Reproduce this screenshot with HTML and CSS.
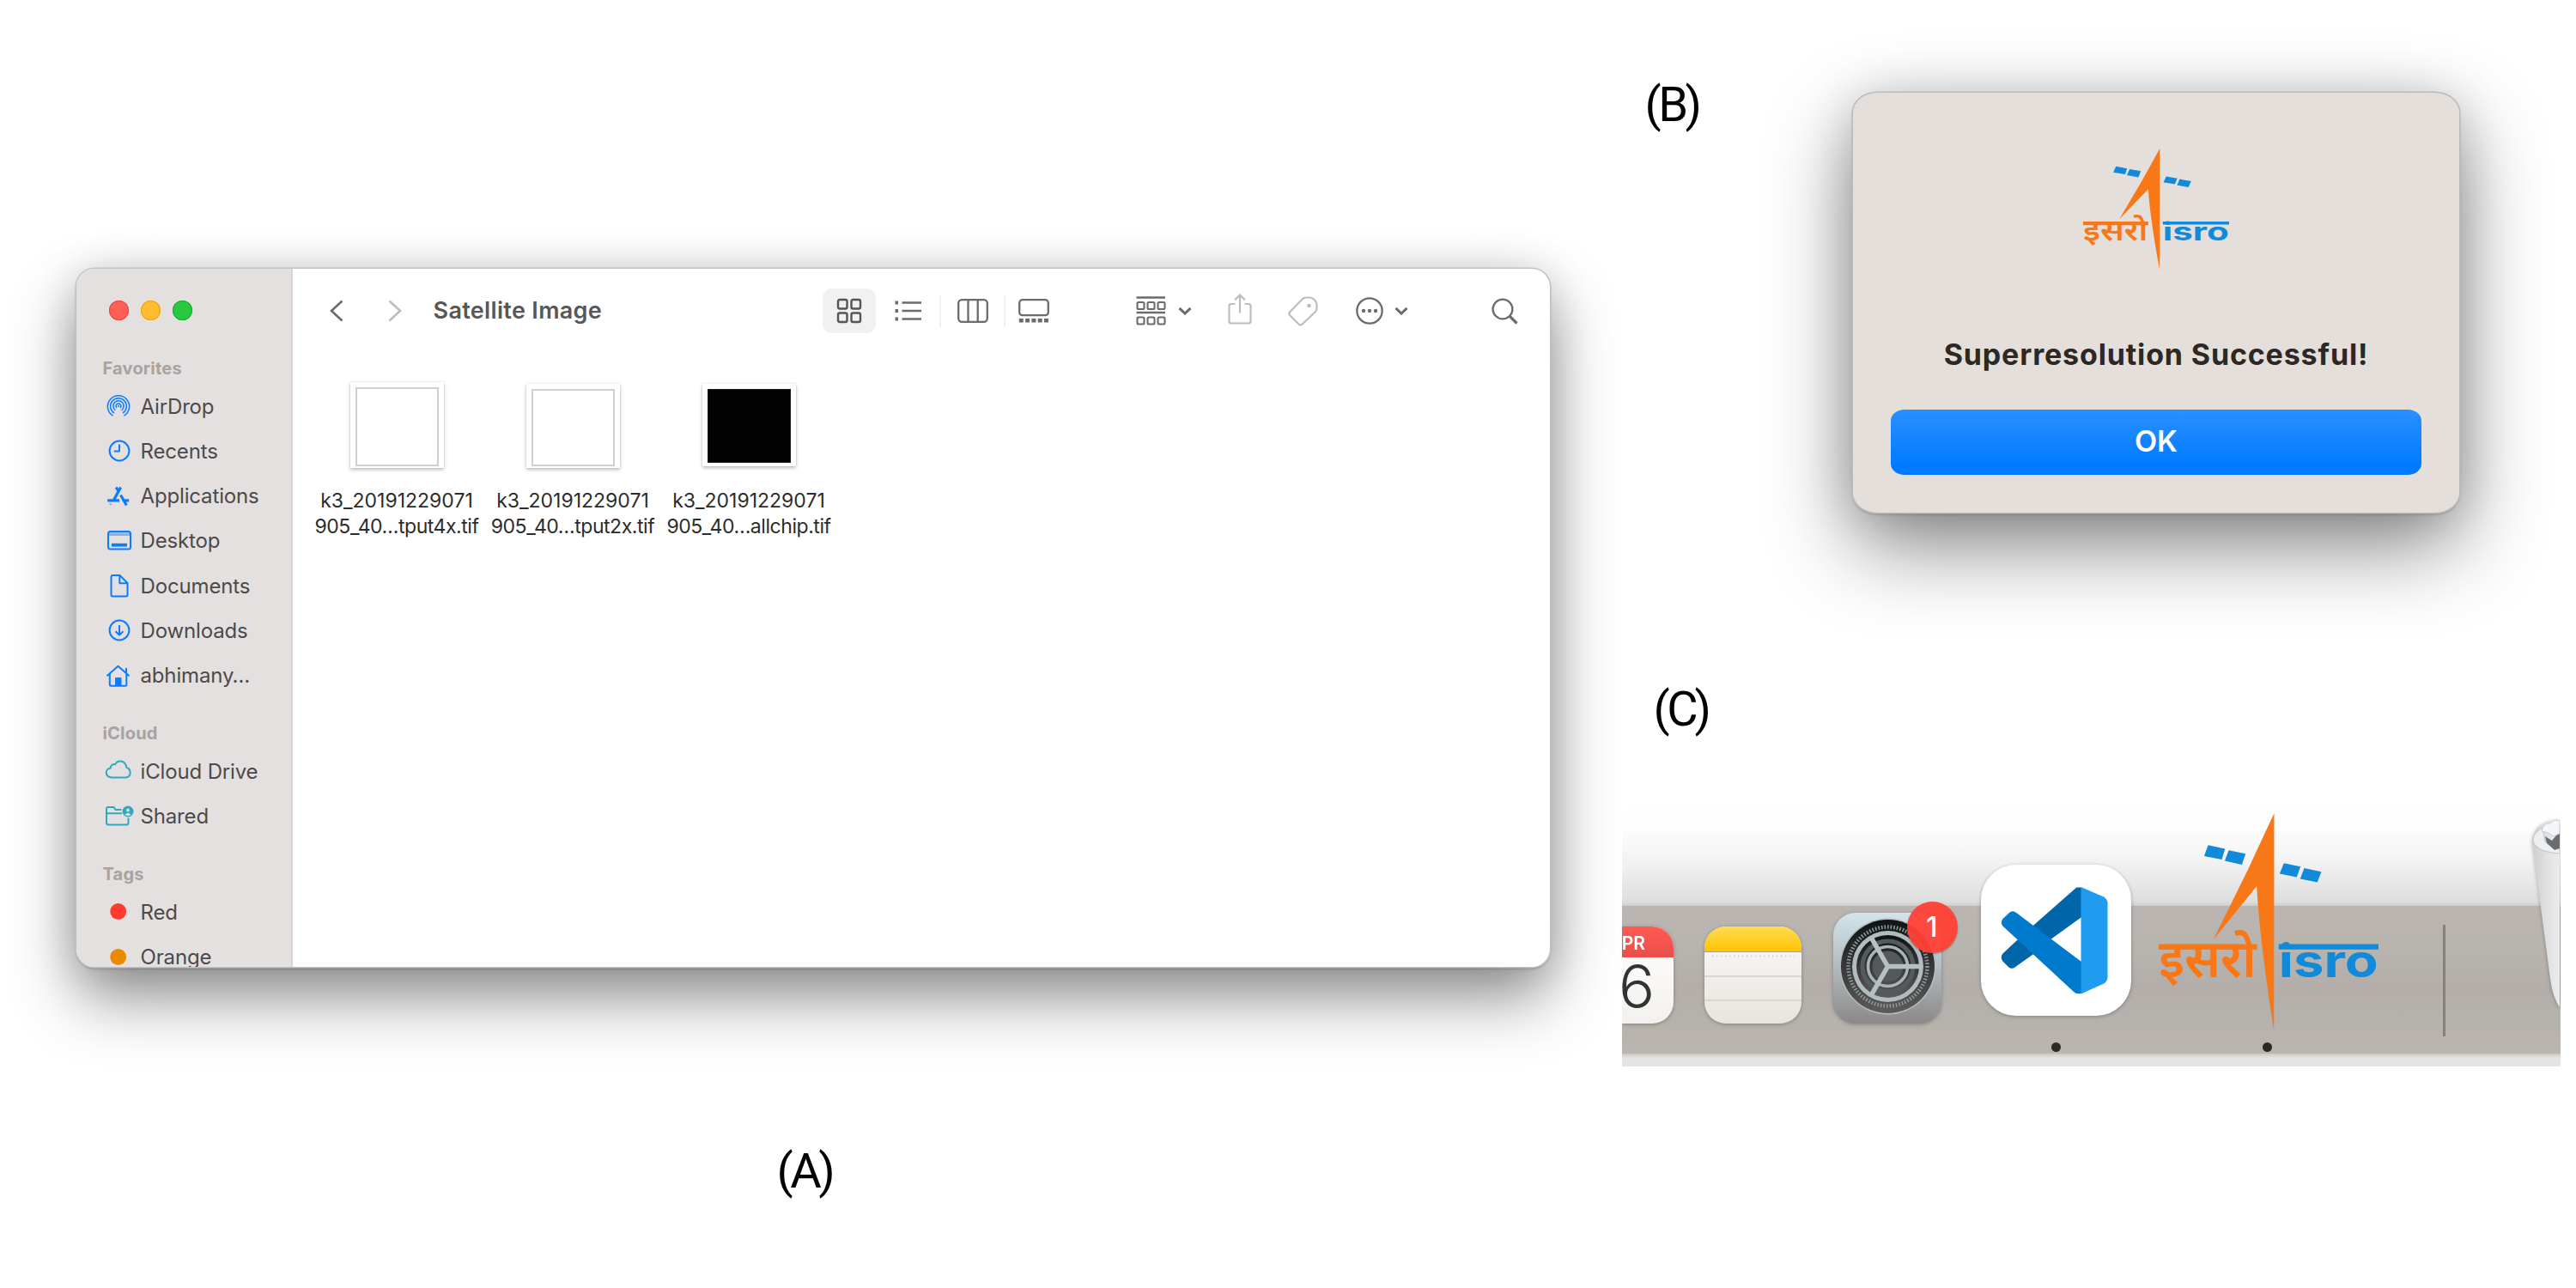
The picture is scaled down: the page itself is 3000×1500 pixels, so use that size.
FILE: index.html
```html
<!DOCTYPE html>
<html lang="en">
<head>
<meta charset="utf-8">
<title>Super-resolution output</title>
<link rel="stylesheet" href="styles.css">
</head>
<body>
<main class="page">
  <section class="col-left">
    <div class="finder">
      <aside class="sidebar">
        <div class="lights"><i class="red"></i><i class="yellow"></i><i class="green"></i></div>
        <h3>Favorites</h3>
        <ul>
          <li><svg viewBox="0 0 32 32"><path stroke-width="1.500" d="M9.600 27.200A12.600 12.600 0 1 1 22.400 27.200M11 24A9.400 9.400 0 1 1 21 24M12.400 20.800A6.100 6.100 0 1 1 19.600 20.800M14 18A2.900 2.900 0 1 1 18 18"/><circle class="fill" cx="16" cy="16" r=".6" stroke-width="1"/></svg>AirDrop</li>
          <li><svg viewBox="0 0 32 32"><circle cx="17" cy="16" r="11.400"/><path d="M17 8.500V16.500H10.800"/></svg>Recents</li>
          <li><svg viewBox="0 0 32 32"><path stroke-width="3.200" d="M18.600 5.500 10.500 20.300M13.200 5.500 16 10M18.500 14.500 25.300 26.500M3.200 20.800H17M21.500 20.800H28.200M6.700 25.600 7 25"/></svg>Applications</li>
          <li><svg viewBox="0 0 32 32"><rect x="4" y="5" width="26" height="20.500" rx="2.500"/><path opacity=".45" stroke-width="3.600" d="M5 8.200H29"/><path class="fill" stroke="none" d="M8 18.800H26V22.600H8Z"/></svg>Desktop</li>
          <li><svg viewBox="0 0 32 32"><path d="M9.500 4H17.500L26.500 13V26.500Q26.500 28.500 24.500 28.500H9.500Q7.500 28.500 7.500 26.500V6Q7.500 4 9.500 4ZM17.300 4.500V13.200H26"/></svg>Documents</li>
          <li><svg viewBox="0 0 32 32"><circle cx="17" cy="16" r="11.400"/><path d="M17 10V21.200M12.600 17.200 17 21.600 21.400 17.200"/></svg>Downloads</li>
          <li><svg viewBox="0 0 32 32"><path d="M2.500 16.200 15.500 4.800 28.500 16.200M5.800 14V26.300Q5.800 27.800 7.300 27.800H23.800Q25.300 27.800 25.300 26.300V14M25 12.500V7"/><path class="fill" d="M13 19H18.500V27H13Z"/></svg>abhimany…</li>
        </ul>
        <h3>iCloud</h3>
        <ul class="teal">
          <li><svg viewBox="0 0 32 32"><path d="M8.500 23.500C-.2 23-.2 13.500 6.800 12.500 6.500 9.500 9.500 7.500 12 8.300 15.500 2 24.500 3.800 25.300 11.800 31 13.500 31.500 23 24.500 23.500Z"/></svg>iCloud Drive</li>
          <li><svg viewBox="0 0 32 32"><path d="M19.500 8H12.500L10.500 5H4Q2 5 2 7V23Q2 25.500 4.500 25.500H25.500Q27.500 25.500 27.500 23V17.500M2 12.200H20"/><circle class="fill" stroke="none" cx="27" cy="10" r="6.500"/><circle cx="27" cy="8.500" r="1.900" fill="#e4e0df" stroke="none"/><path fill="#e4e0df" stroke="none" d="M23.500 14Q27 9.500 30.500 14Q27 16 23.500 14Z"/></svg>Shared</li>
        </ul>
        <h3>Tags</h3>
        <ul>
          <li><svg viewBox="0 0 32 32"><circle cx="15.700" cy="15.500" r="9.400" fill="#ff3b30" stroke="none"/></svg>Red</li>
          <li><svg viewBox="0 0 32 32"><circle cx="15.700" cy="15.500" r="9.400" fill="#eb8a00" stroke="none"/></svg>Orange</li>
        </ul>
      </aside>
      <div class="content">
        <header class="toolbar">
          <svg class="t-back" width="16" height="26" viewBox="0 0 16 26"><path stroke-width="2.600" d="M14.500 1.500 2 13 14.500 24.500"/></svg>
          <svg class="t-fwd dim" width="16" height="26" viewBox="0 0 16 26"><path stroke-width="2.600" d="M1.500 1.500 14 13 1.500 24.500"/></svg>
          <h2>Satellite Image</h2>
          <span class="active"><svg width="30" height="30" viewBox="0 0 30 30"><path stroke-width="2.400" d="M4 2H10.500Q12.500 2 12.500 4V10.500Q12.500 12.500 10.500 12.500H4Q2 12.500 2 10.500V4Q2 2 4 2ZM19.500 2H26Q28 2 28 4V10.500Q28 12.500 26 12.500H19.500Q17.500 12.500 17.500 10.500V4Q17.500 2 19.500 2ZM4 17.500H10.500Q12.500 17.500 12.500 19.500V26Q12.500 28 10.500 28H4Q2 28 2 26V19.500Q2 17.500 4 17.500ZM19.500 17.500H26Q28 17.500 28 19.500V26Q28 28 26 28H19.500Q17.500 28 17.500 26V19.500Q17.500 17.500 19.500 17.500Z"/></svg></span>
          <svg class="t-list" width="32" height="24" viewBox="0 0 32 24"><path stroke-width="2.600" d="M8.500 2.500H31M8.500 12H31M8.500 21.500H31"/><path stroke-width="4" d="M.5 2.500H4M.5 12H4M.5 21.500H4"/></svg>
          <i class="sep s1"></i>
          <svg class="t-cols" width="36" height="28" viewBox="0 0 36 28"><rect x="1.200" y="1.200" width="33.600" height="25.600" rx="4"/><path d="M12.500 1V27M23.700 1V27"/></svg>
          <i class="sep s2"></i>
          <svg class="t-gal" width="36" height="28" viewBox="0 0 36 28"><rect x="1.200" y="1.200" width="33.600" height="18" rx="3.500"/><path stroke-width="4.600" stroke-dasharray="5 2.300" d="M.8 25.300H35.500"/></svg>
          <svg class="t-group" width="35" height="34" viewBox="0 0 35 34"><path d="M.5 1.500H34M.5 19H34"/><g stroke-width="2.100"><rect x="1.500" y="7" width="8" height="8" rx="1.500"/><rect x="13.500" y="7" width="8" height="8" rx="1.500"/><rect x="25.500" y="7" width="8" height="8" rx="1.500"/><rect x="1.500" y="24.500" width="8" height="8" rx="1.500"/><rect x="13.500" y="24.500" width="8" height="8" rx="1.500"/><rect x="25.500" y="24.500" width="8" height="8" rx="1.500"/></g></svg>
          <svg class="t-ch1" width="16" height="10" viewBox="0 0 16 10"><path stroke-width="3" d="M1.500 1.800 8 8 14.500 1.800"/></svg>
          <svg class="t-share dim" width="28" height="36" viewBox="0 0 28 36"><path stroke-width="2.200" d="M8.500 12H4Q1.500 12 1.500 14.500V32Q1.500 34.500 4 34.500H24Q26.500 34.500 26.500 32V14.500Q26.500 12 24 12H19.500M14 22.500V2M8 7.500 14 1.500 20 7.500"/></svg>
          <svg class="t-tag dim" width="35" height="35" viewBox="0 0 35 35"><path stroke-width="2.200" d="M2 18.500 16.500 3.500Q18.500 1.500 21.500 1.500H25Q28 1.500 30 3.500L32 5.500Q33.500 7.500 33.500 10V13.500Q33.500 16.500 31.500 18.500L16 33Q14.500 34 13 33L2 22Q.5 20.300 2 18.500Z"/><circle cx="24.500" cy="11" r="1.200"/></svg>
          <svg class="t-more" width="32" height="32" viewBox="0 0 32 32"><circle cx="16" cy="16" r="14.700"/><g class="dots"><circle cx="9" cy="16" r="2.200"/><circle cx="16" cy="16" r="2.200"/><circle cx="23" cy="16" r="2.200"/></g></svg>
          <svg class="t-ch2" width="16" height="10" viewBox="0 0 16 10"><path stroke-width="3" d="M1.500 1.800 8 8 14.500 1.800"/></svg>
          <svg class="t-search" width="31" height="31" viewBox="0 0 31 31"><circle cx="13" cy="13" r="11.400"/><path stroke-width="3.200" d="M21.300 21.300 29.500 29.500"/></svg>
        </header>
        <div class="files">
          <figure><div class="pic"><div class="thumb tall"></div></div><figcaption>k3_20191229071<br><span>905_40…tput4x.tif</span></figcaption></figure>
          <figure><div class="pic"><div class="thumb"></div></div><figcaption>k3_20191229071<br><span>905_40…tput2x.tif</span></figcaption></figure>
          <figure><div class="pic chip"><div class="thumb black"></div></div><figcaption>k3_20191229071<br><span>905_40…allchip.tif</span></figcaption></figure>
        </div>
      </div>
    </div>
    <p class="label label-a">(A)</p>
  </section>

  <section class="col-right">
    <div class="panel-b">
      <p class="label label-b">(B)</p>
      <div class="dialog">
        <svg class="logo" width="170" height="141" viewBox="102 80 769 760" preserveAspectRatio="none">
          <path class="orange" d="M506 80 412 282 293 523 445 335C450 430 462 530 472 610 482 690 494 770 505 840Z"/>
          <path class="blue" d="M275 192 334 205 323 242 261 230ZM347 210 406 222 393 260 333 247ZM540 255 598 267 585 304 525 292ZM611 272 671 285 657 322 597 310Z"/>
          <path class="orange" d="M102 538H444V557H102Z"/>
          <path class="blue" d="M522 538H871V557H522Z"/>
          <text class="mark-hi" x="102" y="655" textLength="342" lengthAdjust="spacingAndGlyphs">इसरो</text>
          <text class="mark-en" x="522" y="655" textLength="348" lengthAdjust="spacingAndGlyphs">isro</text>
        </svg>
        <h1>Superresolution Successful!</h1>
        <button type="button">OK</button>
      </div>
    </div>
    <p class="label label-c">(C)</p>
    <div class="dock">
      <svg class="d-cal" width="60" height="113" viewBox="0 0 60 113">
        <defs><linearGradient id="calr" x2="0" y2="1"><stop offset="0" stop-color="#ff5a54"/><stop offset="1" stop-color="#e9504b"/></linearGradient><linearGradient id="calw" x2="0" y2="1"><stop offset="0" stop-color="#fff"/><stop offset="1" stop-color="#f3f1ee"/></linearGradient><clipPath id="calc"><rect x="-52" width="112" height="113" rx="25"/></clipPath></defs>
        <g clip-path="url(#calc)"><rect width="60" height="113" fill="url(#calw)"/><rect width="60" height="36" fill="url(#calr)"/></g>
        <text class="cal-m" x="27" y="27" text-anchor="end">APR</text><text class="cal-d" x="-4" y="95">6</text>
      </svg>
      <svg class="d-notes" width="113" height="113" viewBox="0 0 113 113">
        <defs><linearGradient id="ny" x2="0" y2="1"><stop offset="0" stop-color="#ffdc55"/><stop offset="1" stop-color="#ffc400"/></linearGradient><linearGradient id="nw" x2="0" y2="1"><stop offset="0" stop-color="#fafaf9"/><stop offset="1" stop-color="#e8e4de"/></linearGradient><clipPath id="nc"><rect width="113" height="113" rx="25"/></clipPath></defs>
        <g clip-path="url(#nc)"><rect width="113" height="113" fill="url(#nw)"/><rect width="113" height="28.500" fill="url(#ny)"/><path stroke="#a9a295" stroke-width="1.600" d="M0 29.300H113"/><path stroke="#d5d2ce" stroke-width="2" stroke-dasharray="1.500 3.500" d="M9 34.500H105"/><path stroke="#d8d5d2" stroke-width="2" d="M0 58H113M0 86H113"/></g>
      </svg>
      <div class="d-set">
        <svg width="126" height="129" viewBox="0 0 126 129">
          <defs><linearGradient id="sg" x2="0" y2="1"><stop offset="0" stop-color="#d3e4ec"/><stop offset=".45" stop-color="#b4bfc4"/><stop offset="1" stop-color="#8b8986"/></linearGradient><linearGradient id="gg" x2="0" y2="1"><stop offset="0" stop-color="#101314"/><stop offset="1" stop-color="#5c5b5a"/></linearGradient></defs>
          <rect width="126" height="129" rx="26" fill="url(#sg)"/>
          <g transform="translate(63.500 62.500)" fill="none">
            <circle r="56" fill="#b4bcbf"/><circle r="54.500" fill="url(#gg)"/>
            <circle r="46" stroke="#8f989b" stroke-width="4.500" stroke-dasharray="1.600 2"/>
            <circle r="41.500" fill="#b1bcc0"/><circle r="36.500" fill="url(#gg)"/>
            <circle r="29.500" stroke="#555b5d" stroke-width="5"/>
            <circle r="23" stroke="#a9b4b8" stroke-width="3.600"/><circle r="18" fill="#56595a"/>
            <path stroke="#b6c1c5" stroke-width="5.500" d="M0 0H39M0 0-19.500 33.800M0 0-19.500-33.800"/>
          </g>
        </svg>
        <span class="badge">1</span>
      </div>
      <div class="app d-code">
        <svg width="175" height="176" viewBox="0 0 175 176">
          <rect width="175" height="176" rx="41" fill="#fff"/>
          <g stroke-linejoin="round">
            <path fill="#0065a9" stroke="#0065a9" stroke-width="3" d="M112 28 62 72 80 86 116 60V28ZM43 89 26.500 104.500Q24 108 26.500 111.500L33 118Q36 120.500 39 118L60 103Z"/>
            <path fill="#007acc" stroke="#007acc" stroke-width="3" d="M34 57 26.500 64Q24 67.500 27 71L109 147Q112 150 117 148V115L40 57Q37 54.500 34 57Z"/>
            <path fill="#1f9cf0" d="M116.500 26 143 37.500Q147.500 40 147.500 45V131Q147.500 136 143 138.500L116.500 150.500Z"/>
          </g>
        </svg>
        <i class="run"></i>
      </div>
      <div class="app d-isro">
        <svg width="256" height="253" viewBox="102 80 769 760" preserveAspectRatio="none">
          <path class="orange" d="M506 80 412 282 293 523 445 335C450 430 462 530 472 610 482 690 494 770 505 840Z"/>
          <path class="blue" d="M275 192 334 205 323 242 261 230ZM347 210 406 222 393 260 333 247ZM540 255 598 267 585 304 525 292ZM611 272 671 285 657 322 597 310Z"/>
          <path class="orange" d="M102 538H444V557H102Z"/>
          <path class="blue" d="M522 538H871V557H522Z"/>
          <text class="mark-hi" x="102" y="655" textLength="342" lengthAdjust="spacingAndGlyphs">इसरो</text>
          <text class="mark-en" x="522" y="655" textLength="348" lengthAdjust="spacingAndGlyphs">isro</text>
        </svg>
        <i class="run"></i>
      </div>
      <i class="divider"></i>
      <svg class="d-trash" width="33" height="225" viewBox="0 0 33 225">
        <defs><linearGradient id="tb"><stop offset="0" stop-color="#cbcdd0"/><stop offset=".5" stop-color="#e0e0e1"/><stop offset="1" stop-color="#ececee"/></linearGradient></defs>
        <path fill="url(#tb)" d="M1 30Q2 16 12 10L20 6 33 6V223Q25 212 22 190Z"/>
        <path fill="#eeeff1" stroke="#c6c9cd" stroke-width="1.200" d="M2 30Q1 20 13 14L16 30 33 38V44Q6 42 2 30Z"/>
        <path fill="#6a6c6f" d="M16 24 24 29 29 23 33 21V38L27 40 18 32Z"/>
        <path fill="#f3f5f8" stroke="#c9ccd2" d="M12 18Q14 8 22 9 27 3 33 6V20L26 24 20 20Z"/>
      </svg>
    </div>
  </section>
</main>
</body>
</html>
```
FILE: styles.css
```css
* { box-sizing: border-box; margin: 0; padding: 0; }
body { width: 3000px; height: 1500px; background: #fff; overflow: hidden; font-family: Inter, "Noto Sans", sans-serif; }
i { font-style: normal; }
.page { display: grid; grid-template-columns: 1880px 1120px; height: 1500px; }

.orange { fill: #f87717; }
.blue { fill: #108ad9; }
.mark-hi { font: 600 185px "Noto Sans Devanagari", Inter, sans-serif; fill: #f87717; }
.mark-en { font: 700 160px Inter, sans-serif; fill: #108ad9; }

.label { font: 400 56px/66px Roboto, sans-serif; letter-spacing: -3.5px; color: #000; }

/* Finder window */
.col-left { padding: 313px 0 0 89px; }
.finder {
  display: grid; grid-template-columns: 252px 1fr; width: 1716px; height: 813px;
  border-radius: 21px; overflow: hidden; background: #fff;
  box-shadow: 0 0 0 1.5px #c2c2c2, 0 2px 3px rgba(0,0,0,.3), 0 36px 76px rgba(0,0,0,.43), 0 4px 50px rgba(0,0,0,.14);
}
.label-a { margin: 205px 0 0 815.5px; }
.sidebar { background: #e4e0df; border-right: 2px solid #dad5d4; overflow: hidden; }
.lights { display: flex; gap: 14.3px; padding: 37px 0 0 37.5px; height: 74.5px; }
.lights i { width: 23px; height: 23px; border-radius: 50%; }
.red { background: #ff5f57; box-shadow: inset 0 0 0 1px #e9493f; }
.yellow { background: #febc2e; box-shadow: inset 0 0 0 1px #e5a61b; }
.green { background: #28c840; box-shadow: inset 0 0 0 1px #17b02f; }
.sidebar h3 { font: 700 20px/30px Inter, sans-serif; letter-spacing: .2px; color: #a7a3a2; margin: 26.5px 0 3px 30.5px; }
.sidebar ul { list-style: none; }
.sidebar li {
  display: flex; align-items: center; gap: 9.5px; height: 52.25px; padding-left: 33px;
  font-size: 24px; letter-spacing: -.15px; color: #4c4a4a; white-space: nowrap;
}
.sidebar svg { width: 32px; height: 32px; flex: none; overflow: visible; fill: none; stroke: #0a7cff; stroke-width: 2; stroke-linejoin: round; }
.sidebar .fill { fill: #0a7cff; }
.sidebar .teal svg { stroke: #30a9bf; }
.sidebar .teal .fill { fill: #30a9bf; }

.toolbar { display: flex; align-items: center; height: 98px; }
.toolbar svg { flex: none; fill: none; stroke: #6b6b6b; stroke-width: 2.3; }
.toolbar .dim { stroke: #bdbdbd; }
.toolbar .dots { fill: #6b6b6b; stroke: none; }
.toolbar h2 { font: 600 27px/36px Inter, sans-serif; letter-spacing: .33px; color: #575757; width: 196.5px; margin-left: 36.5px; white-space: nowrap; }
.t-back { margin-left: 42.5px; }
.t-fwd { margin-left: 52.5px; }
.active { display: flex; align-items: center; justify-content: center; width: 62px; height: 52px; margin-left: 257px; border-radius: 11px; background: #f1f1f1; }
.toolbar .active svg { stroke: #555; }
.t-list { margin-left: 22px; }
.sep { width: 2px; height: 37px; background: #f0f0f0; }
.s1 { margin-left: 20px; }
.t-cols { margin-left: 19px; }
.s2 { margin-left: 18px; }
.t-gal { margin-left: 15px; }
.t-group { margin-left: 101px; }
.t-ch1 { margin-left: 14px; }
.toolbar .t-share { margin: -4px 0 0 42px; }
.t-tag { margin-left: 42px; }
.t-more { margin-left: 44px; }
.t-ch2 { margin-left: 13px; }
.t-search { margin-left: 97px; }

.files { display: flex; padding: 34px 0 0 18.5px; }
.files figure { width: 205px; text-align: center; }
.pic { height: 100px; display: flex; justify-content: center; align-items: flex-end; }
.chip { padding-bottom: 2px; }
.thumb { width: 109px; height: 98px; padding: 6px; background: #fff; box-shadow: 0 2px 4px rgba(0,0,0,.26), 0 0 2px rgba(0,0,0,.1); }
.thumb::before { content: ""; display: block; height: 100%; border: 2px solid #cfcfcf; }
.tall { height: 100px; }
.black { height: 96px; }
.black::before { background: #040304; border-color: #1a1a1a; border-width: 1px; }
.files figcaption { margin-top: 23px; font-size: 23px; line-height: 30px; color: #2c2c2c; white-space: nowrap; }
.files span { letter-spacing: -.45px; }

/* Dialog */
.panel-b { display: flex; height: 704px; padding: 0 0 0 35.5px; margin-top: 89px; }
.label-b { width: 242.5px; }
.dialog {
  display: flex; flex-direction: column; align-items: center; width: 706px; height: 489px; margin-top: 19px;
  border-radius: 29px / 23px; background: #e4dfdb;
  box-shadow: 0 0 0 1.5px #bdbbb9, 0 2px 3px rgba(0,0,0,.3), 0 38px 100px rgba(0,0,0,.48), 0 4px 56px rgba(0,0,0,.14);
}
.logo { margin-top: 65px; }
.dialog h1 { margin-top: 79px; font: 700 34px/40px Inter, sans-serif; letter-spacing: .85px; color: #2d2824; }
.dialog button {
  width: 618px; height: 76px; padding-bottom: 3px; margin-top: 44px; border: 0; border-radius: 16px / 13px; color: #fff;
  background: linear-gradient(#2a90ff, #007aff 88%); font: 600 34px/73px Inter, sans-serif;
}

/* Dock */
.label-c { margin-left: 45.5px; height: 137px; }
.dock {
  display: flex; align-items: flex-start; width: 1093px; height: 312px; margin-left: 9px; overflow: hidden;
  background:
    linear-gradient(#cbc9c6, #e3e3e3) 0 297px / 100% 5px no-repeat,
    linear-gradient(#bbb5b1, #b8b4ae 25%, #b3aeaa 55%, #b6b2ac 80%, #bbb5b0) 0 125px / 100% 172px no-repeat,
    linear-gradient(#fff, #fefefe 25%, #f2f2f2 60%, #dedede 96%, #cfcdcb) 0 0 / 100% 125px no-repeat,
    #e3e3e3;
}
.dock > * { flex: none; }
.dock svg { display: block; filter: drop-shadow(0 1px 2px rgba(0,0,0,.28)); }
.cal-m { font: 600 21px Inter, sans-serif; fill: #fff; }
.cal-d { font: 300 70px Inter, sans-serif; fill: #333; }
.d-cal { margin-top: 149px; }
.d-notes { margin: 149px 0 0 35.5px; }
.d-set { position: relative; margin: 133px 0 0 37px; }
.badge {
  position: absolute; left: 86px; top: -13px; width: 59px; height: 60px; border-radius: 50%; text-align: center;
  background: rgba(255,64,54,.95); color: #fff; font-size: 32px; line-height: 60px; font-weight: 500;
  box-shadow: 0 1px 2px rgba(0,0,0,.3);
}
.app { display: flex; flex-direction: column; align-items: center; }
.run { width: 11px; height: 11px; border-radius: 50%; background: #2d2925; }
.d-code { margin: 77px 0 0 46.5px; }
.d-code .run { margin-top: 31px; }
.d-isro { margin: 17px 0 0 32px; }
.dock .d-isro svg { filter: none; }
.d-isro .run { margin: 14px 3px 0 0; }
.divider { width: 3px; height: 130px; margin: 147px 0 0 75px; background: #86817c; }
.d-trash { margin: 20px 0 0 99.5px; }
```
